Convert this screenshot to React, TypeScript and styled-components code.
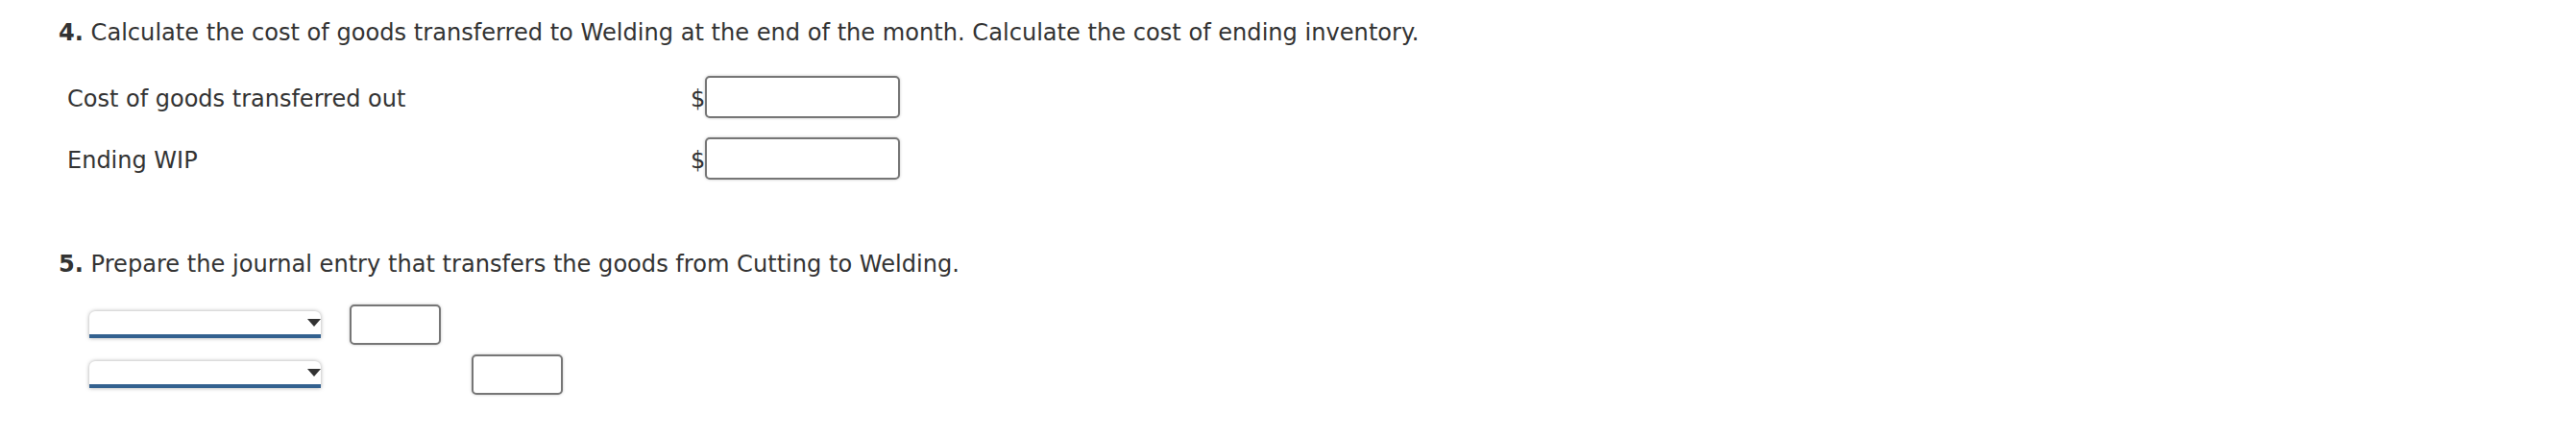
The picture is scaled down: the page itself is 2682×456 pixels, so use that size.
import React from "react";
import styled, { createGlobalStyle } from "styled-components";

const Global = createGlobalStyle`
  html, body { margin: 0; padding: 0; background: #fff; }
  body { font-family: "DejaVu Sans", Verdana, sans-serif; color: #333; }
`;

const Page = styled.div`
  padding: 19px 0 0 61px;
`;

const Question = styled.p<{ $top?: number }>`
  margin: ${(p) => p.$top ?? 0}px 0 0 0;
  font-size: 24.1px;
  line-height: 30px;
  white-space: nowrap;
  b { font-weight: bold; }
`;

const AmountTable = styled.div`
  display: grid;
  grid-template-columns: 649px 15px 203px;
  grid-auto-rows: 64px;
  align-items: center;
  margin: 20px 0 0 9px;
`;

const Label = styled.span`
  font-size: 24px;
  padding-top: 4px;
`;

const Dollar = styled.span`
  font-size: 24px;
  text-align: right;
  padding-top: 4px;
`;

const Box = styled.div<{ $w: number; $h: number }>`
  width: ${(p) => p.$w}px;
  height: ${(p) => p.$h}px;
  box-sizing: border-box;
  border: 2px solid #767676;
  border-radius: 5px;
  box-shadow: 0 0 3px rgba(0, 0, 0, 0.25);
  background: #fff;
`;

const JournalGrid = styled.div`
  display: grid;
  grid-template-columns: 271px 127px 95px;
  grid-auto-rows: 52px;
  align-items: center;
  margin: 22px 0 0 32px;
`;

const Select = styled.div`
  width: 241px;
  height: 28px;
  box-sizing: border-box;
  position: relative;
  background: #fff;
  border-radius: 6px 6px 0 0;
  border-bottom: 4px solid #33618f;
  box-shadow: 0 0 4px rgba(0, 0, 0, 0.35);
`;

const Arrow = styled.span`
  position: absolute;
  right: 0;
  top: 8px;
  width: 0;
  height: 0;
  border-left: 7px solid transparent;
  border-right: 7px solid transparent;
  border-top: 8px solid #333;
`;

const Cell = styled.div<{ $col: number }>`
  grid-column: ${(p) => p.$col};
`;

export default function App() {
  return (
    <>
      <Global />
      <Page>
        <Question>
          <b>4.</b> Calculate the cost of goods transferred to Welding at the end of the month. Calculate the cost of ending inventory.
        </Question>
        <AmountTable>
          <Label>Cost of goods transferred out</Label>
          <Dollar>$</Dollar>
          <Box $w={203} $h={44} />
          <Label>Ending WIP</Label>
          <Dollar>$</Dollar>
          <Box $w={203} $h={44} />
        </AmountTable>
        <Question $top={63}>
          <b>5.</b> Prepare the journal entry that transfers the goods from Cutting to Welding.
        </Question>
        <JournalGrid>
          <Cell $col={1}><Select><Arrow /></Select></Cell>
          <Cell $col={2}><Box $w={95} $h={42} /></Cell>
          <Cell $col={1}><Select><Arrow /></Select></Cell>
          <Cell $col={3}><Box $w={95} $h={42} /></Cell>
        </JournalGrid>
      </Page>
    </>
  );
}
